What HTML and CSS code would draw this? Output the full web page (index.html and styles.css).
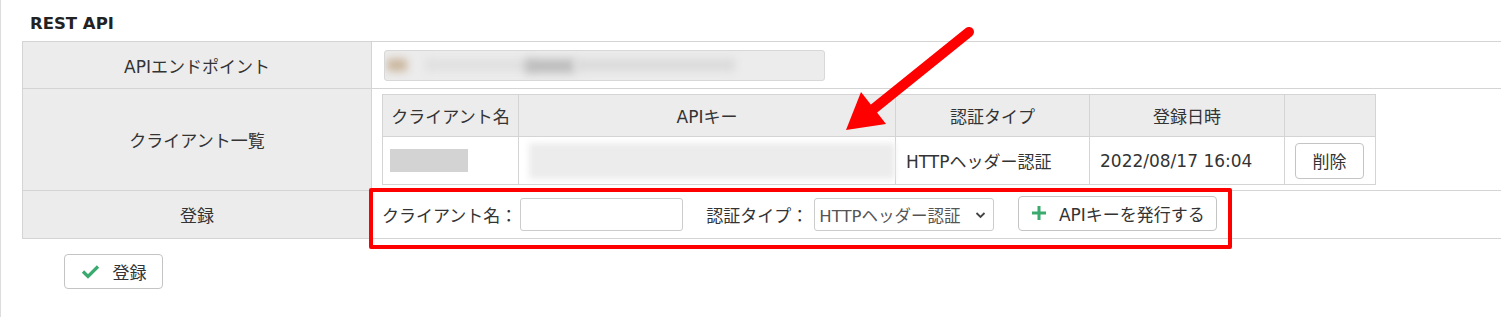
FILE: index.html
```html
<!DOCTYPE html>
<html lang="ja">
<head>
  <meta charset="UTF-8" />
  <title>REST API</title>
  <link rel="stylesheet" href="styles.css">
</head>
<body>
  <div class="page">
    <h2 class="title">REST API</h2>

    <table class="settings">
      <tr class="row-endpoint">
        <th>APIエンドポイント</th>
        <td>
          <div class="endpoint">
            <span class="blur b1"></span>
            <span class="blur b2"></span>
            <span class="blur b3"></span>
            <span class="blur b4"></span>
          </div>
        </td>
      </tr>
      <tr class="row-clients">
        <th>クライアント一覧</th>
        <td>
          <table class="clients">
            <tr>
              <th class="c-name">クライアント名</th>
              <th class="c-key">APIキー</th>
              <th class="c-type">認証タイプ</th>
              <th class="c-date">登録日時</th>
              <th class="c-act"></th>
            </tr>
            <tr>
              <td><span class="name-mask"></span></td>
              <td><span class="key-mask"></span></td>
              <td>HTTPヘッダー認証</td>
              <td>2022/08/17 16:04</td>
              <td><button class="btn btn-del">削除</button></td>
            </tr>
          </table>
        </td>
      </tr>
      <tr class="row-register">
        <th>登録</th>
        <td>
          <div class="reg-form">
            <label>クライアント名：</label>
            <input type="text" class="name-input">
            <label class="type-label">認証タイプ：</label>
            <div class="select">
              <span>HTTPヘッダー認証</span>
              <svg width="11" height="8" viewBox="0 0 11 8"><path d="M1.5 2 L5.5 6 L9.5 2" fill="none" stroke="#444" stroke-width="1.8"/></svg>
            </div>
            <button class="btn btn-issue">
              <svg width="16" height="16" viewBox="0 0 16 16"><path d="M8 1 V15 M1 8 H15" stroke="#3aaa6e" stroke-width="3"/></svg>
              APIキーを発行する
            </button>
          </div>
        </td>
      </tr>
    </table>

    <button class="btn btn-save">
      <svg width="19" height="15" viewBox="0 0 19 15"><path d="M2 7.5 L7 12.5 L17 2.5" fill="none" stroke="#3aaa6e" stroke-width="3.2"/></svg>
      登録
    </button>

    <!-- annotation -->
    <div class="mark-box"></div>
    <svg class="mark-arrow" width="200" height="150" viewBox="0 0 200 150">
      <line x1="123" y1="5" x2="20" y2="88" stroke="#f00" stroke-width="10" stroke-linecap="round"/>
      <polygon points="0,103 15,65 40,97" fill="#f00"/>
    </svg>
  </div>
</body>
</html>
```

FILE: styles.css
```css
body { margin: 0; font-family: "DejaVu Sans", "Noto Sans CJK JP", sans-serif; color: #333; background: #fff; }
.page { position: relative; height: 317px; overflow: hidden; border-left: 1px solid #ddd; }

.title { margin: 0 0 7px 29px; padding-top: 14px; font-size: 16.5px; line-height: 20px; font-weight: bold; color: #222; }

.settings { margin-left: 21px; width: 1490px; border-collapse: collapse; font-size: 17px; }
.settings > tbody > tr > th { width: 348px; background: #ececec; font-weight: normal; border: 1px solid #d4d4d4; color: #333; padding: 0; }
.settings > tbody > tr > td { border: 1px solid #d4d4d4; padding: 0 0 0 10px; }

.row-endpoint { height: 47px; }
.row-clients { height: 102px; }
.row-register { height: 48px; }

.endpoint { position: relative; width: 439px; height: 29px; margin-left: 2px; background: #ececec; border: 1px solid #d8d8d8; border-radius: 3px; overflow: hidden; }
.blur { position: absolute; top: 8px; height: 12px; filter: blur(4px); }
.b1 { left: 2px; width: 20px; background: #c9b49a; }
.b2 { left: 40px; width: 110px; background: #e0e0e0; }
.b3 { left: 140px; width: 50px; height: 14px; background: #bdbdbd; }
.b4 { left: 190px; width: 160px; background: #dadada; }

.clients { border-collapse: collapse; table-layout: fixed; width: 993px; margin: 0; }
.clients th, .clients td { border: 1px solid #d4d4d4; box-sizing: border-box; padding: 0; font-size: 17px; }
.clients th { background: #ececec; font-weight: normal; height: 42px; text-align: center; white-space: nowrap; }
.clients td { height: 48px; background: #fff; text-align: left; padding-left: 10px; white-space: nowrap; }
.clients td:first-child { padding-left: 7px; }
.c-name { width: 136px; }
.c-key { width: 377px; }
.c-type { width: 194px; }
.c-date { width: 195px; }
.c-act { width: 91px; }
.name-mask { display: block; width: 78px; height: 23px; background: #d3d3d3; }
.key-mask { display: block; width: 366px; height: 36px; background: #ececec; filter: blur(3px); }

.btn { font-family: inherit; font-size: 17px; color: #333; background: #fff; border: 1px solid #c4c4c4; border-radius: 4px; cursor: pointer; display: inline-flex; align-items: center; justify-content: center; }
.btn-del { width: 69px; height: 36px; padding: 0; }

.reg-form { display: flex; align-items: center; }
.reg-form label { font-size: 17px; white-space: nowrap; }
.name-input { width: 163px; height: 33px; box-sizing: border-box; border: 1px solid #ccc; border-radius: 3px; margin-left: 3px; flex: none; }
.type-label { margin-left: 23px; }
.select { width: 180px; height: 33px; box-sizing: border-box; margin-left: 6px; border: 1px solid #ccc; border-radius: 3px; display: flex; align-items: center; justify-content: space-between; padding: 0 7px 0 4px; font-size: 16.5px; color: #555; white-space: nowrap; overflow: hidden; flex: none; }
.btn-issue { width: 199px; height: 35px; margin-left: 24px; margin-top: -3px; gap: 12px; padding: 0; flex: none; }

.btn-save { margin: 15px 0 0 63px; width: 99px; height: 35px; gap: 13px; padding: 0; }

.mark-box { position: absolute; left: 368px; top: 188px; width: 855px; height: 53px; border: 4px solid #f00; border-radius: 2px; }
.mark-arrow { position: absolute; left: 845px; top: 27px; }
```
